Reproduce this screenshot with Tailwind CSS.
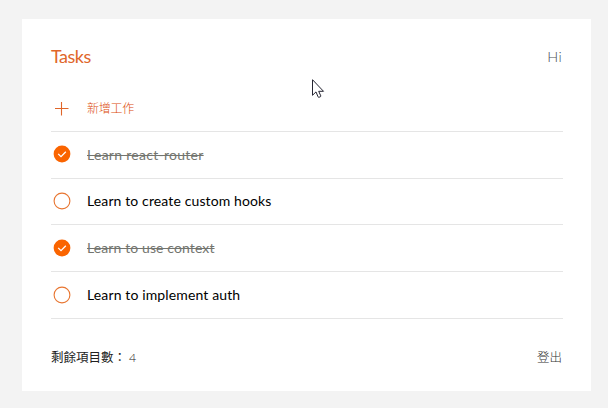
<!DOCTYPE html>
<html lang="zh-Hant">
<head>
<meta charset="utf-8">
<title>Tasks</title>
<script src="https://cdn.jsdelivr.net/npm/@tailwindcss/browser@4"></script>
</head>
<body class="h-[408px] w-[608px] overflow-hidden bg-[#f3f3f3] pt-[19px] pl-[22px] font-['Lato','Noto_Sans_CJK_TC',sans-serif]">
<main class="flex h-[372px] w-[569px] flex-col bg-white pr-7 pl-[29px]">
  <header class="flex h-[66px] items-center justify-between pt-[10px]">
    <h1 class="pb-[2px] text-[18px] leading-6 tracking-[-0.5px] text-[#e0662a]">Tasks</h1>
    <span class="pr-px text-[14.5px] leading-6 font-light tracking-[0.3px] text-[#4c5257]">Hi</span>
  </header>
  <div class="flex h-[47px] items-center gap-[15px] border-b border-[#e5e5e5] text-[#dc4c0c]">
    <svg class="ml-px h-5 w-5" viewBox="0 0 20 20" fill="none" stroke="#e0662a" stroke-width="1.1"><path d="M3 10.5h13.5M9.5 4v13.5"/></svg>
    <span class="pt-px text-[12px] font-light tracking-[-0.25px]">新增工作</span>
  </div>
  <ul>
    <li class="flex h-[47px] items-center gap-[15px] border-b border-[#e5e5e5]">
      <svg class="mb-[2px] ml-px h-5 w-5" viewBox="0 0 20 20" fill="none"><circle cx="10" cy="10" r="8.4" fill="#fa6400"/><path d="M6.2 9.9l2.8 2.7 4.8-4.8" stroke="#fff" stroke-width="1.3"/></svg>
      <span class="pb-[2px] text-[14px] tracking-[0.28px] text-[#73756f] line-through">Learn react-router</span>
    </li>
    <li class="flex h-[46px] items-center gap-[15px] border-b border-[#e5e5e5]">
      <svg class="mb-[2px] ml-px h-5 w-5" viewBox="0 0 20 20" fill="none"><circle cx="10" cy="10" r="7.9" stroke="#e87530" stroke-width="1.1"/></svg>
      <span class="pb-[2px] text-[14px] tracking-[0.12px] text-black">Learn to create custom hooks</span>
    </li>
    <li class="flex h-[47px] items-center gap-[15px] border-b border-[#e5e5e5]">
      <svg class="ml-px h-5 w-5" viewBox="0 0 20 20" fill="none"><circle cx="10" cy="10" r="8.4" fill="#fa6400"/><path d="M6.2 9.9l2.8 2.7 4.8-4.8" stroke="#fff" stroke-width="1.3"/></svg>
      <span class="pb-[2px] text-[14px] tracking-[0.11px] text-[#73756f] line-through">Learn to use context</span>
    </li>
    <li class="flex h-[47px] items-center gap-[15px] border-b border-[#e5e5e5]">
      <svg class="ml-px h-5 w-5" viewBox="0 0 20 20" fill="none"><circle cx="10" cy="10" r="7.9" stroke="#e87530" stroke-width="1.1"/></svg>
      <span class="pb-[2px] text-[14px] tracking-[0.13px] text-black">Learn to implement auth</span>
    </li>
  </ul>
  <footer class="flex flex-1 items-center justify-between pt-[6px] text-[12.5px]">
    <span class="flex text-[#222]"><span>剩餘項目數：</span><span class="ml-[3px] font-light">4</span></span>
    <span class="pr-px font-light text-[#333]">登出</span>
  </footer>
</main>
<svg class="absolute top-[79px] left-[312px] h-5 w-[13px]" viewBox="0 0 13 20" fill="#fff" stroke="#252532" stroke-width="1"><path d="M.5.7v15.6l3.5-3.4 2.1 5 .7.5 1.8-.8.2-.7-2.1-4.6h4.8z"/></svg>
</body>
</html>
